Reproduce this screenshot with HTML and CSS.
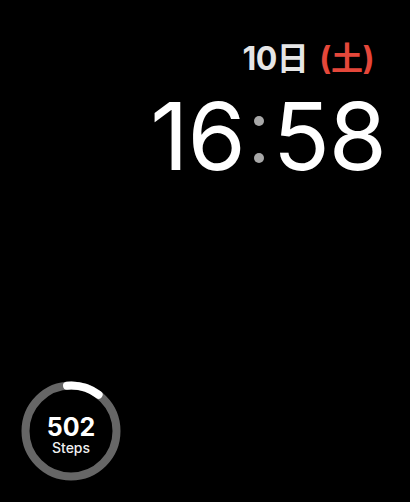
FILE: index.html
```html
<!DOCTYPE html>
<html>
<head>
<meta charset="utf-8">
<link rel="stylesheet" href="styles.css">
</head>
<body>
<div class="face">
  <div class="clock">
    <div class="date"><span class="day">10日</span><span class="wd">(土)</span></div>
    <div class="time"><span class="hh">16</span><span class="colon"><i></i><i></i></span><span class="mm">58</span></div>
  </div>
  <div class="steps">
    <svg class="ring" width="104" height="104" viewBox="0 0 104 104">
      <circle cx="52" cy="52" r="45.5" fill="none" stroke="#666" stroke-width="8"/>
      <path d="M 48.0 6.7 A 45.5 45.5 0 0 1 79.6 15.8" fill="none" stroke="#fff" stroke-width="8" stroke-linecap="round"/>
    </svg>
    <div class="steps-text">
      <div class="num">502</div>
      <div class="lbl">Steps</div>
    </div>
  </div>
</div>
</body>
</html>
```
FILE: styles.css
```css
html, body { margin: 0; padding: 0; background: #000; }
body { width: 410px; height: 502px; overflow: hidden; font-family: Inter, "Noto Sans CJK JP", sans-serif; }
.face { position: relative; width: 410px; height: 502px; display: flex; flex-direction: column; justify-content: space-between; }
.clock { display: flex; flex-direction: column; align-items: flex-end; padding: 42px 24px 0 0; }
.date { font-size: 32px; font-weight: 700; line-height: 34px; margin-right: 12px; display: flex; gap: 11px; letter-spacing: -0.5px; }
.day { color: #e6e6e6; }
.wd { color: #e5473a; }
.time { display: flex; align-items: center; color: #fff; font-size: 94px; font-weight: 400; line-height: 80px; letter-spacing: -1px; margin-top: 20px; }
.colon { display: flex; flex-direction: column; gap: 27px; margin: 6px 9px 0 9px; }
.colon i { display: block; width: 10px; height: 10px; border-radius: 50%; background: #a8a8a8; }
.steps { position: relative; width: 104px; height: 104px; margin: 0 0 19px 19px; }
.ring { display: block; }
.steps-text { position: absolute; inset: 0; display: flex; flex-direction: column; align-items: center; justify-content: center; gap: 2px; color: #fff; padding-top: 9px; box-sizing: border-box; }
.num { font-size: 25px; font-weight: 700; line-height: 22px; }
.lbl { font-size: 14px; font-weight: 500; line-height: 15px; color: #f0f0f0; }
```
